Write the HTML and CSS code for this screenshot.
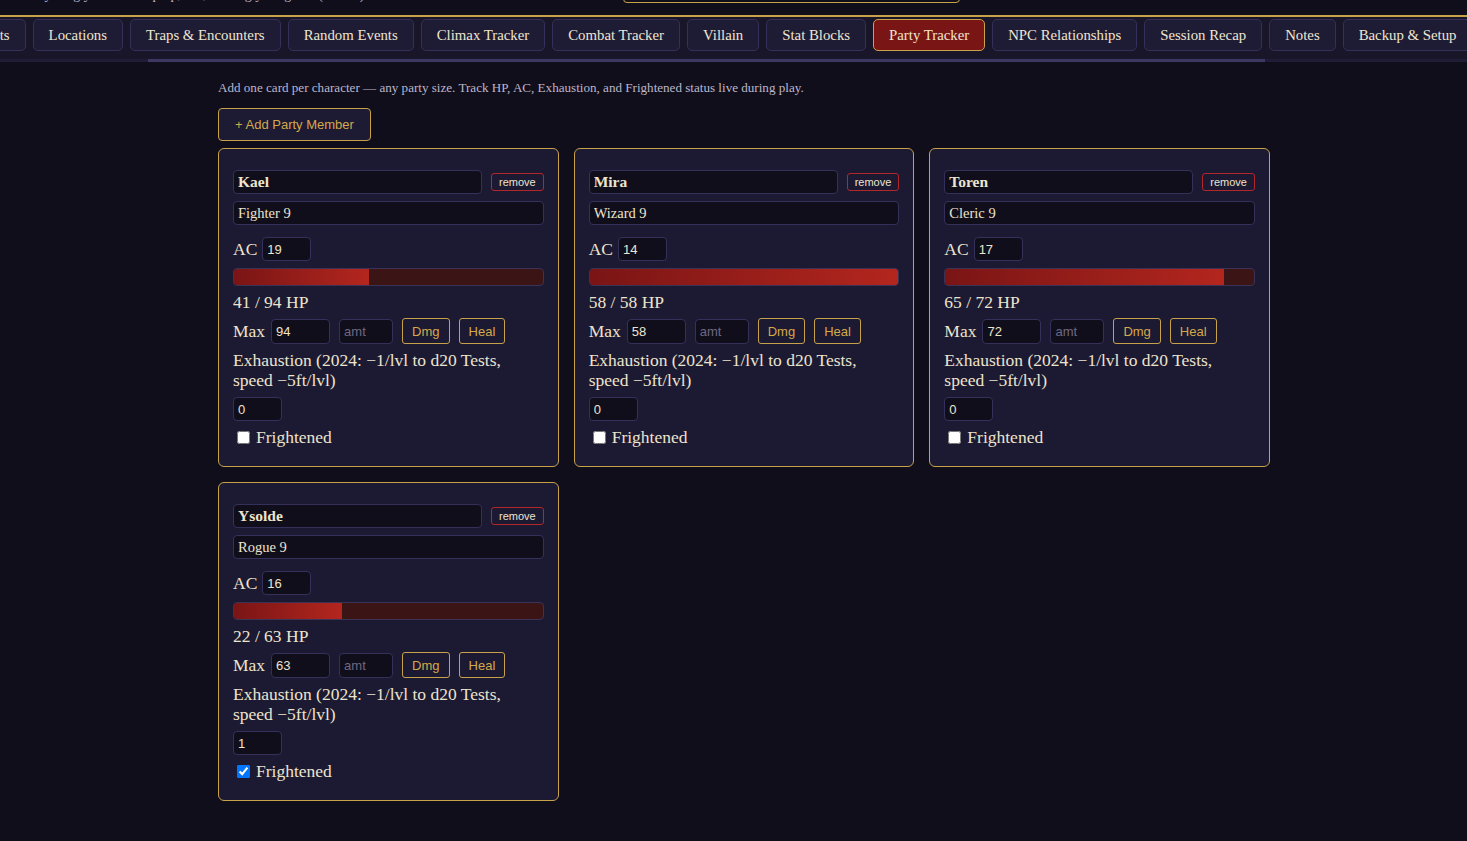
FILE: index.html
```html
<!DOCTYPE html>
<html lang="en">
<head>
  <meta charset="UTF-8">
  <meta name="viewport" content="width=device-width, initial-scale=1.0">
  <title>Party Tracker</title>
  <link rel="stylesheet" href="styles.css">
</head>
<body>

  <div class="top">
    <span class="tagline">Everything you need to prep, run, and log your game (offline)</span>
    <div class="search"></div>
  </div>

  <div class="tabbar">
    <nav class="tabs">
      <button class="tab">Session Prep</button>
      <button class="tab">Plot Points</button>
      <button class="tab tab-loc">Locations</button>
      <button class="tab">Traps &amp; Encounters</button>
      <button class="tab">Random Events</button>
      <button class="tab">Climax Tracker</button>
      <button class="tab">Combat Tracker</button>
      <button class="tab">Villain</button>
      <button class="tab">Stat Blocks</button>
      <button class="tab active">Party Tracker</button>
      <button class="tab">NPC Relationships</button>
      <button class="tab">Session Recap</button>
      <button class="tab">Notes</button>
      <button class="tab">Backup &amp; Setup</button>
      <button class="tab">Rules Glossary</button>
      <button class="tab">Dice Roller</button>
    </nav>
    <div class="track"><div class="thumb"></div></div>
  </div>

  <main class="panel">
    <p class="hint">Add one card per character — any party size. Track HP, AC, Exhaustion, and Frightened status live during play.</p>
    <button class="add">+ Add Party Member</button>

    <div class="party">

      <div class="card">
        <div class="card-head">
          <input type="text" class="name" value="Kael">
          <button class="remove">remove</button>
        </div>
        <input type="text" class="cls" value="Fighter 9">
        <div class="row ac-row">
          <span>AC</span>
          <input type="number" class="num" value="19">
        </div>
        <div class="bar"><div class="fill" style="width: 43.6%"></div></div>
        <div class="hp">41 / 94 HP</div>
        <div class="row">
          <span>Max</span>
          <input type="number" class="num max" value="94">
          <input type="number" class="num amt" placeholder="amt">
          <button class="act">Dmg</button>
          <button class="act">Heal</button>
        </div>
        <div class="exh">Exhaustion (2024: −1/lvl to d20 Tests, speed −5ft/lvl)</div>
        <input type="number" class="num" value="0">
        <label class="fear"><input type="checkbox"> Frightened</label>
      </div>

      <div class="card">
        <div class="card-head">
          <input type="text" class="name" value="Mira">
          <button class="remove">remove</button>
        </div>
        <input type="text" class="cls" value="Wizard 9">
        <div class="row ac-row">
          <span>AC</span>
          <input type="number" class="num" value="14">
        </div>
        <div class="bar"><div class="fill" style="width: 100%"></div></div>
        <div class="hp">58 / 58 HP</div>
        <div class="row">
          <span>Max</span>
          <input type="number" class="num max" value="58">
          <input type="number" class="num amt" placeholder="amt">
          <button class="act">Dmg</button>
          <button class="act">Heal</button>
        </div>
        <div class="exh">Exhaustion (2024: −1/lvl to d20 Tests, speed −5ft/lvl)</div>
        <input type="number" class="num" value="0">
        <label class="fear"><input type="checkbox"> Frightened</label>
      </div>

      <div class="card">
        <div class="card-head">
          <input type="text" class="name" value="Toren">
          <button class="remove">remove</button>
        </div>
        <input type="text" class="cls" value="Cleric 9">
        <div class="row ac-row">
          <span>AC</span>
          <input type="number" class="num" value="17">
        </div>
        <div class="bar"><div class="fill" style="width: 90.3%"></div></div>
        <div class="hp">65 / 72 HP</div>
        <div class="row">
          <span>Max</span>
          <input type="number" class="num max" value="72">
          <input type="number" class="num amt" placeholder="amt">
          <button class="act">Dmg</button>
          <button class="act">Heal</button>
        </div>
        <div class="exh">Exhaustion (2024: −1/lvl to d20 Tests, speed −5ft/lvl)</div>
        <input type="number" class="num" value="0">
        <label class="fear"><input type="checkbox"> Frightened</label>
      </div>

      <div class="card">
        <div class="card-head">
          <input type="text" class="name" value="Ysolde">
          <button class="remove">remove</button>
        </div>
        <input type="text" class="cls" value="Rogue 9">
        <div class="row ac-row">
          <span>AC</span>
          <input type="number" class="num" value="16">
        </div>
        <div class="bar"><div class="fill" style="width: 34.9%"></div></div>
        <div class="hp">22 / 63 HP</div>
        <div class="row">
          <span>Max</span>
          <input type="number" class="num max" value="63">
          <input type="number" class="num amt" placeholder="amt">
          <button class="act">Dmg</button>
          <button class="act">Heal</button>
        </div>
        <div class="exh">Exhaustion (2024: −1/lvl to d20 Tests, speed −5ft/lvl)</div>
        <input type="number" class="num" value="1">
        <label class="fear"><input type="checkbox" checked> Frightened</label>
      </div>

    </div>
  </main>

  <script>
  var nav = document.querySelector('.tabs');
  var loc = document.querySelector('.tab-loc');
  var thumb = document.querySelector('.thumb');
  nav.scrollLeft = loc.getBoundingClientRect().left - nav.getBoundingClientRect().left - 33;
  thumb.style.width = (nav.clientWidth / nav.scrollWidth * 100) + '%';
  thumb.style.marginLeft = (nav.scrollLeft / nav.scrollWidth * 100) + '%';
  </script>

</body>
</html>
```

FILE: styles.css
```css
* {
  box-sizing: border-box;
}

body {
  margin: 0;
  background-color: #100e1b;
  color: #ede4cd;
  font-family: "Liberation Serif", serif;
}

.top {
  height: 15px;
  display: flex;
  align-items: flex-end;
  padding: 0 0 12px 18px;
  overflow: hidden;
}

.tagline {
  width: 605px;
  flex-shrink: 0;
  font-size: 14px;
  line-height: 16px;
  color: #b9b3c9;
  white-space: nowrap;
}

.search {
  width: 337px;
  height: 30px;
  flex-shrink: 0;
  border: 1px solid #c7a24a;
  border-radius: 4px;
}

.tabbar {
  background-color: #19162a;
  border-top: 2px solid #c7a24a;
}

.tabs {
  display: flex;
  gap: 7px;
  padding: 2px 23px 8px 8px;
  overflow-x: auto;
  scrollbar-width: none;
}

.tabs::-webkit-scrollbar {
  display: none;
}

.track {
  height: 3px;
  background-color: #201c35;
}

.thumb {
  height: 100%;
  background-color: #3d3763;
}

.tab {
  flex-shrink: 0;
  padding: 6px 15px;
  font-family: "Liberation Serif", serif;
  font-size: 14.8px;
  line-height: 18px;
  color: #efe6d0;
  background-color: #1e1b35;
  border: 1px solid #35305a;
  border-radius: 5px;
  white-space: nowrap;
  cursor: pointer;
}

.tab.active {
  background-color: #7a1515;
  border-color: #c7a24a;
}

.panel {
  max-width: 1073px;
  margin: 0 auto;
  padding: 17px 0 40px 21px;
}

.hint {
  margin: 0;
  font-size: 13.1px;
  line-height: 18px;
  color: #bcb6cb;
}

.add {
  margin-top: 11px;
  height: 33px;
  padding: 0 16px;
  font-family: "Liberation Sans", sans-serif;
  font-size: 13px;
  color: #d4a94a;
  background-color: #1d1a33;
  border: 1px solid #c7a24a;
  border-radius: 4px;
  cursor: pointer;
}

.party {
  margin-top: 7px;
  display: grid;
  grid-template-columns: repeat(3, 1fr);
  gap: 15px;
}

.card {
  display: flex;
  flex-direction: column;
  align-items: flex-start;
  gap: 7px;
  padding: 21px 14px 20px;
  background-color: #1c1932;
  border: 1px solid #c7a24a;
  border-radius: 6px;
  font-size: 17.5px;
}

input {
  height: 24px;
  padding: 0 4px;
  color: #ede4cd;
  background-color: #100e1b;
  border: 1px solid #35305a;
  border-radius: 4px;
  font-family: "Liberation Sans", sans-serif;
  font-size: 13px;
}

input::placeholder {
  color: #6d6882;
}

.card-head {
  align-self: stretch;
  display: flex;
  align-items: center;
  gap: 9px;
}

.name {
  flex-grow: 1;
  min-width: 0;
  font-family: "Liberation Serif", serif;
  font-size: 15.5px;
  font-weight: bold;
}

.remove {
  height: 18px;
  padding: 0 7px;
  font-family: "Liberation Sans", sans-serif;
  font-size: 11px;
  color: #ede4cd;
  background-color: transparent;
  border: 1px solid #b3262a;
  border-radius: 3px;
  cursor: pointer;
}

.cls {
  align-self: stretch;
  font-family: "Liberation Serif", serif;
  font-size: 14.5px;
}

.row {
  display: flex;
  align-items: center;
  gap: 6px;
}

.ac-row {
  margin-top: 5px;
  gap: 5px;
}

.num {
  width: 49px;
}

.max {
  width: 59px;
  height: 25px;
}

.amt {
  width: 54px;
  height: 25px;
  margin-left: 3px;
}

.act {
  height: 26px;
  margin-left: 3px;
  padding: 0 9px;
  font-family: "Liberation Sans", sans-serif;
  font-size: 13px;
  color: #d4a94a;
  background-color: transparent;
  border: 1px solid #c7a24a;
  border-radius: 3px;
  cursor: pointer;
}

.bar {
  align-self: stretch;
  height: 18px;
  background-color: #3b1416;
  border: 1px solid #3a3356;
  border-radius: 4px;
  overflow: hidden;
}

.fill {
  height: 100%;
  background: linear-gradient(90deg, #7a1515, #b3261e);
}

.hp {
  line-height: 18px;
}

.exh {
  line-height: 19.5px;
}

.fear {
  display: flex;
  align-items: center;
  gap: 3px;
  height: 18px;
}

.fear input {
  height: 13px;
  margin: 0 3px 0 4px;
}
```
